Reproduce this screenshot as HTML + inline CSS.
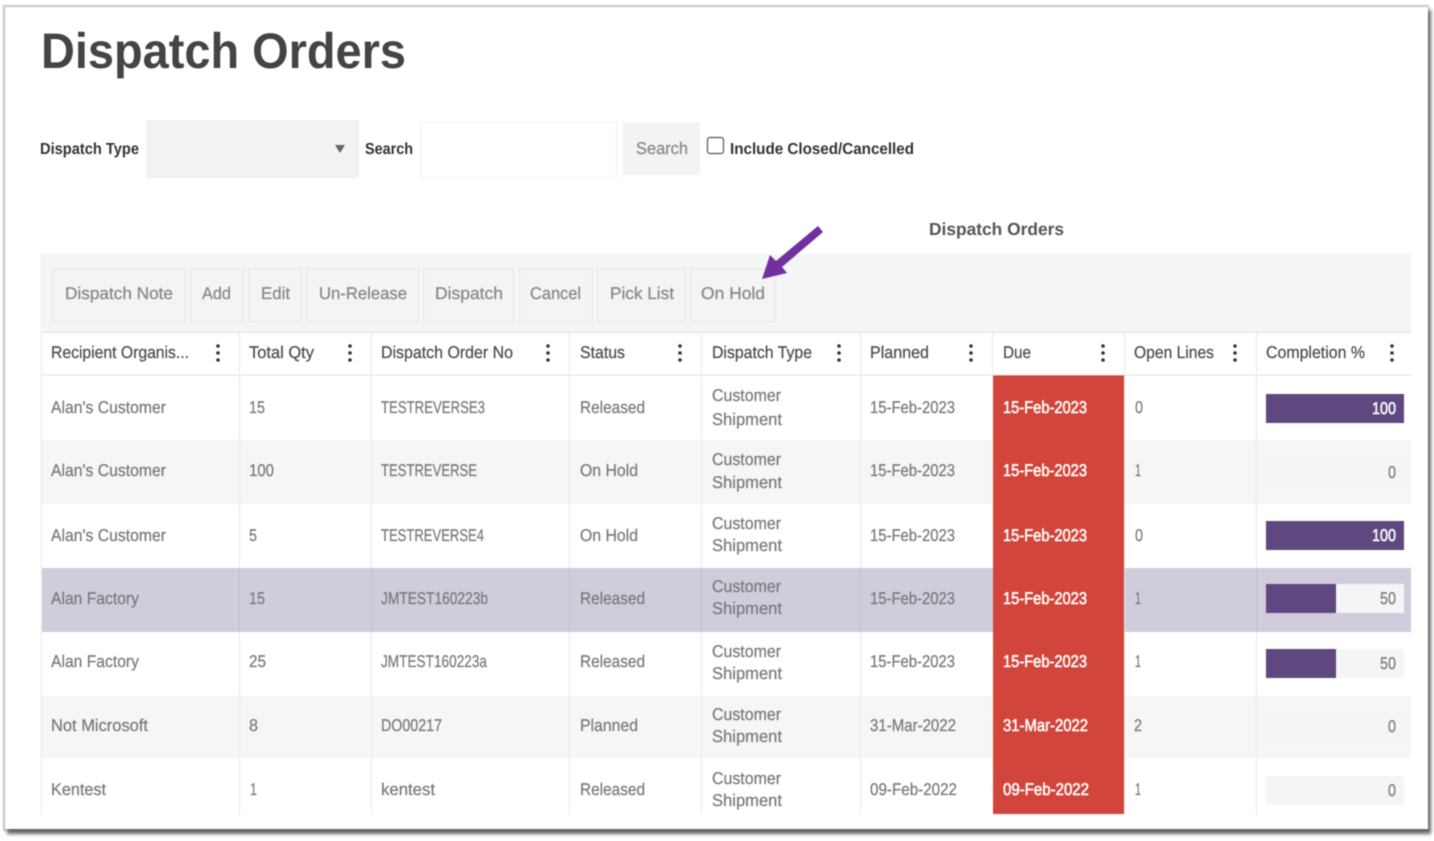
<!DOCTYPE html>
<html><head><meta charset="utf-8"><title>Dispatch Orders</title>
<style>
html,body{margin:0;padding:0;background:#fff;width:1434px;height:841px;overflow:hidden}
svg{display:block;filter:blur(.5px)}
text{font-family:"Liberation Sans",sans-serif;font-size:17px;fill:#7b7b7b;stroke:#7b7b7b;stroke-width:.25px;text-rendering:geometricPrecision}
.h{fill:#4f4f4f;stroke:#4f4f4f}
.b{font-weight:bold;fill:#333;stroke:none;font-size:16px}
.btn{fill:#888;stroke:#888}
.w{fill:#fff;stroke:#fff;stroke-width:.55px}
.wn{fill:#fff;stroke:#fff;stroke-width:.55px}
.l{stroke:#e8e8ea;stroke-width:1}
.s{fill:#f4f5f6}
.bt{fill:#f3f4f5;stroke:#e6e7e9;stroke-width:1}
.d{fill:#333}
</style></head><body>
<svg width="1434" height="841" viewBox="0 0 1434 841" xmlns="http://www.w3.org/2000/svg">
<rect x="3" y="5" width="1426" height="826" fill="#c4c4c4" style="filter:blur(.8px)"/>
<rect x="7" y="10" width="1424" height="824" fill="#666" style="filter:blur(1.8px)"/>
<rect x="5" y="7" width="1423" height="822" fill="#fff"/>

<text x="41" y="68" textLength="365" lengthAdjust="spacingAndGlyphs" style="font-size:50px;font-weight:bold;fill:#444;stroke:none">Dispatch Orders</text>

<text class="b" x="40" y="154" textLength="99" lengthAdjust="spacingAndGlyphs">Dispatch Type</text>
<rect x="146" y="120" width="213" height="58" fill="#f1f2f3"/>
<path d="M335 145h10l-5 8z" fill="#666"/>
<text class="b" x="365" y="154" textLength="48" lengthAdjust="spacingAndGlyphs">Search</text>
<rect x="420.500" y="122.500" width="196" height="55" fill="#fff" stroke="#eee"/>
<rect x="623" y="122" width="77" height="53" fill="#f2f3f4"/>
<text class="btn" x="636" y="154" textLength="52" lengthAdjust="spacingAndGlyphs">Search</text>
<rect x="707.500" y="137.500" width="16" height="16" rx="2.500" fill="#fff" stroke="#555" stroke-width="1.200"/>
<text class="b" x="730" y="154" textLength="184" lengthAdjust="spacingAndGlyphs">Include Closed/Cancelled</text>

<text x="929" y="235" textLength="135" lengthAdjust="spacingAndGlyphs" style="font-weight:bold;font-size:17.500px;fill:#555;stroke:none">Dispatch Orders</text>

<rect x="40" y="254" width="1371" height="78" fill="#f4f5f6"/>
<rect class="bt" x="52.500" y="268.500" width="133" height="53"/>
<rect class="bt" x="190.500" y="268.500" width="53" height="53"/>
<rect class="bt" x="248.500" y="268.500" width="53" height="53"/>
<rect class="bt" x="306.500" y="268.500" width="112" height="53"/>
<rect class="bt" x="423.500" y="268.500" width="90" height="53"/>
<rect class="bt" x="519.500" y="268.500" width="73" height="53"/>
<rect class="bt" x="597.500" y="268.500" width="88" height="53"/>
<rect class="bt" x="690.500" y="268.500" width="85" height="53"/>
<text class="btn" x="65" y="299" textLength="108" lengthAdjust="spacingAndGlyphs">Dispatch Note</text>
<text class="btn" x="202" y="299" textLength="29" lengthAdjust="spacingAndGlyphs">Add</text>
<text class="btn" x="261" y="299" textLength="29" lengthAdjust="spacingAndGlyphs">Edit</text>
<text class="btn" x="319" y="299" textLength="88" lengthAdjust="spacingAndGlyphs">Un-Release</text>
<text class="btn" x="435" y="299" textLength="68" lengthAdjust="spacingAndGlyphs">Dispatch</text>
<text class="btn" x="530" y="299" textLength="51" lengthAdjust="spacingAndGlyphs">Cancel</text>
<text class="btn" x="610" y="299" textLength="64" lengthAdjust="spacingAndGlyphs">Pick List</text>
<text class="btn" x="701" y="299" textLength="64" lengthAdjust="spacingAndGlyphs">On Hold</text>

<path d="M818 226L823 232L782 267L787 273L762 279L770 255L776 261Z" fill="#7030a0"/>

<!-- rows -->
<rect x="41" y="332" width="1370" height="43" fill="#fff"/>
<rect x="41" y="440" width="1370" height="64" fill="#f6f6f6"/>
<rect x="41" y="568" width="1370" height="64" fill="#d1ccdc"/>
<rect x="41" y="696" width="1370" height="62" fill="#f6f6f6"/>
<rect x="993" y="375" width="131" height="439" fill="#d2453a"/>
<path class="l" d="M41.500 332V814M239.500 332V814M371.500 332V814M569.500 332V814M701.500 332V814M860.500 332V814M992.500 332V375M1124.500 332V814M1256.500 332V814"/>
<path d="M239.500 568V632M371.500 568V632M569.500 568V632M701.500 568V632M860.500 568V632M1256.500 568V632" stroke="#c2bdcf"/>
<path d="M41 332.500H1411M41 375H1411" stroke="#e2e2e4" stroke-width="1"/>

<!-- header -->
<text class="h" x="51" y="358" textLength="138" lengthAdjust="spacingAndGlyphs">Recipient Organis...</text>
<text class="h" x="249" y="358" textLength="65" lengthAdjust="spacingAndGlyphs">Total Qty</text>
<text class="h" x="381" y="358" textLength="132" lengthAdjust="spacingAndGlyphs">Dispatch Order No</text>
<text class="h" x="580" y="358" textLength="45" lengthAdjust="spacingAndGlyphs">Status</text>
<text class="h" x="712" y="358" textLength="100" lengthAdjust="spacingAndGlyphs">Dispatch Type</text>
<text class="h" x="870" y="358" textLength="59" lengthAdjust="spacingAndGlyphs">Planned</text>
<text class="h" x="1003" y="358" textLength="28" lengthAdjust="spacingAndGlyphs">Due</text>
<text class="h" x="1134" y="358" textLength="80" lengthAdjust="spacingAndGlyphs">Open Lines</text>
<text class="h" x="1266" y="358" textLength="99" lengthAdjust="spacingAndGlyphs">Completion %</text>
<g class="d">
<circle cx="218" cy="346" r="1.800"/><circle cx="218" cy="353" r="1.800"/><circle cx="218" cy="360" r="1.800"/>
<circle cx="350" cy="346" r="1.800"/><circle cx="350" cy="353" r="1.800"/><circle cx="350" cy="360" r="1.800"/>
<circle cx="548" cy="346" r="1.800"/><circle cx="548" cy="353" r="1.800"/><circle cx="548" cy="360" r="1.800"/>
<circle cx="680" cy="346" r="1.800"/><circle cx="680" cy="353" r="1.800"/><circle cx="680" cy="360" r="1.800"/>
<circle cx="839" cy="346" r="1.800"/><circle cx="839" cy="353" r="1.800"/><circle cx="839" cy="360" r="1.800"/>
<circle cx="971" cy="346" r="1.800"/><circle cx="971" cy="353" r="1.800"/><circle cx="971" cy="360" r="1.800"/>
<circle cx="1103" cy="346" r="1.800"/><circle cx="1103" cy="353" r="1.800"/><circle cx="1103" cy="360" r="1.800"/>
<circle cx="1235" cy="346" r="1.800"/><circle cx="1235" cy="353" r="1.800"/><circle cx="1235" cy="360" r="1.800"/>
<circle cx="1392" cy="346" r="1.800"/><circle cx="1392" cy="353" r="1.800"/><circle cx="1392" cy="360" r="1.800"/>
</g>

<!-- col 1 -->
<text x="51" y="413" textLength="115" lengthAdjust="spacingAndGlyphs">Alan's Customer</text>
<text x="51" y="476" textLength="115" lengthAdjust="spacingAndGlyphs">Alan's Customer</text>
<text x="51" y="541" textLength="115" lengthAdjust="spacingAndGlyphs">Alan's Customer</text>
<text x="51" y="604" textLength="88" lengthAdjust="spacingAndGlyphs">Alan Factory</text>
<text x="51" y="667" textLength="88" lengthAdjust="spacingAndGlyphs">Alan Factory</text>
<text x="51" y="731" textLength="97" lengthAdjust="spacingAndGlyphs">Not Microsoft</text>
<text x="51" y="795" textLength="55" lengthAdjust="spacingAndGlyphs">Kentest</text>
<!-- col 2 -->
<text x="249" y="413" textLength="16" lengthAdjust="spacingAndGlyphs">15</text>
<text x="249" y="476" textLength="25" lengthAdjust="spacingAndGlyphs">100</text>
<text x="249" y="541" textLength="8" lengthAdjust="spacingAndGlyphs">5</text>
<text x="249" y="604" textLength="16" lengthAdjust="spacingAndGlyphs">15</text>
<text x="249" y="667" textLength="17" lengthAdjust="spacingAndGlyphs">25</text>
<text x="249" y="731" textLength="9" lengthAdjust="spacingAndGlyphs">8</text>
<text x="250" y="795" textLength="7" lengthAdjust="spacingAndGlyphs">1</text>
<!-- col 3 -->
<text x="381" y="413" textLength="104" lengthAdjust="spacingAndGlyphs">TESTREVERSE3</text>
<text x="381" y="476" textLength="96" lengthAdjust="spacingAndGlyphs">TESTREVERSE</text>
<text x="381" y="541" textLength="103" lengthAdjust="spacingAndGlyphs">TESTREVERSE4</text>
<text x="381" y="604" textLength="107" lengthAdjust="spacingAndGlyphs">JMTEST160223b</text>
<text x="381" y="667" textLength="106" lengthAdjust="spacingAndGlyphs">JMTEST160223a</text>
<text x="381" y="731" textLength="61" lengthAdjust="spacingAndGlyphs">DO00217</text>
<text x="381" y="795" textLength="54" lengthAdjust="spacingAndGlyphs">kentest</text>
<!-- col 4 -->
<text x="580" y="413" textLength="65" lengthAdjust="spacingAndGlyphs">Released</text>
<text x="580" y="476" textLength="58" lengthAdjust="spacingAndGlyphs">On Hold</text>
<text x="580" y="541" textLength="58" lengthAdjust="spacingAndGlyphs">On Hold</text>
<text x="580" y="604" textLength="65" lengthAdjust="spacingAndGlyphs">Released</text>
<text x="580" y="667" textLength="65" lengthAdjust="spacingAndGlyphs">Released</text>
<text x="580" y="731" textLength="58" lengthAdjust="spacingAndGlyphs">Planned</text>
<text x="580" y="795" textLength="65" lengthAdjust="spacingAndGlyphs">Released</text>
<!-- col 5 -->
<text x="712" y="401" textLength="69" lengthAdjust="spacingAndGlyphs">Customer</text>
<text x="712" y="425" textLength="70" lengthAdjust="spacingAndGlyphs">Shipment</text>
<text x="712" y="465" textLength="69" lengthAdjust="spacingAndGlyphs">Customer</text>
<text x="712" y="488" textLength="70" lengthAdjust="spacingAndGlyphs">Shipment</text>
<text x="712" y="529" textLength="69" lengthAdjust="spacingAndGlyphs">Customer</text>
<text x="712" y="551" textLength="70" lengthAdjust="spacingAndGlyphs">Shipment</text>
<text x="712" y="592" textLength="69" lengthAdjust="spacingAndGlyphs">Customer</text>
<text x="712" y="614" textLength="70" lengthAdjust="spacingAndGlyphs">Shipment</text>
<text x="712" y="657" textLength="69" lengthAdjust="spacingAndGlyphs">Customer</text>
<text x="712" y="679" textLength="70" lengthAdjust="spacingAndGlyphs">Shipment</text>
<text x="712" y="720" textLength="69" lengthAdjust="spacingAndGlyphs">Customer</text>
<text x="712" y="742" textLength="70" lengthAdjust="spacingAndGlyphs">Shipment</text>
<text x="712" y="784" textLength="69" lengthAdjust="spacingAndGlyphs">Customer</text>
<text x="712" y="806" textLength="70" lengthAdjust="spacingAndGlyphs">Shipment</text>
<!-- col 6 -->
<text x="870" y="413" textLength="85" lengthAdjust="spacingAndGlyphs">15-Feb-2023</text>
<text x="870" y="476" textLength="85" lengthAdjust="spacingAndGlyphs">15-Feb-2023</text>
<text x="870" y="541" textLength="85" lengthAdjust="spacingAndGlyphs">15-Feb-2023</text>
<text x="870" y="604" textLength="85" lengthAdjust="spacingAndGlyphs">15-Feb-2023</text>
<text x="870" y="667" textLength="85" lengthAdjust="spacingAndGlyphs">15-Feb-2023</text>
<text x="870" y="731" textLength="86" lengthAdjust="spacingAndGlyphs">31-Mar-2022</text>
<text x="870" y="795" textLength="87" lengthAdjust="spacingAndGlyphs">09-Feb-2022</text>
<!-- due -->
<text class="w" x="1003" y="413" textLength="84" lengthAdjust="spacingAndGlyphs">15-Feb-2023</text>
<text class="w" x="1003" y="476" textLength="84" lengthAdjust="spacingAndGlyphs">15-Feb-2023</text>
<text class="w" x="1003" y="541" textLength="84" lengthAdjust="spacingAndGlyphs">15-Feb-2023</text>
<text class="w" x="1003" y="604" textLength="84" lengthAdjust="spacingAndGlyphs">15-Feb-2023</text>
<text class="w" x="1003" y="667" textLength="84" lengthAdjust="spacingAndGlyphs">15-Feb-2023</text>
<text class="w" x="1003" y="731" textLength="85" lengthAdjust="spacingAndGlyphs">31-Mar-2022</text>
<text class="w" x="1003" y="795" textLength="86" lengthAdjust="spacingAndGlyphs">09-Feb-2022</text>
<!-- open lines -->
<text x="1135" y="413" textLength="8" lengthAdjust="spacingAndGlyphs">0</text>
<text x="1135" y="476" textLength="6" lengthAdjust="spacingAndGlyphs">1</text>
<text x="1135" y="541" textLength="8" lengthAdjust="spacingAndGlyphs">0</text>
<text x="1135" y="604" textLength="6" lengthAdjust="spacingAndGlyphs">1</text>
<text x="1135" y="667" textLength="6" lengthAdjust="spacingAndGlyphs">1</text>
<text x="1134" y="731" textLength="8" lengthAdjust="spacingAndGlyphs">2</text>
<text x="1135" y="795" textLength="6" lengthAdjust="spacingAndGlyphs">1</text>
<!-- completion -->
<rect x="1266" y="394" width="138" height="29" fill="#5f4880"/>
<text class="wn" x="1372" y="414" textLength="24" lengthAdjust="spacingAndGlyphs">100</text>
<rect class="s" x="1266" y="457" width="138" height="29"/>
<text x="1388" y="478" textLength="8" lengthAdjust="spacingAndGlyphs">0</text>
<rect x="1266" y="521" width="138" height="29" fill="#5f4880"/>
<text class="wn" x="1372" y="541" textLength="24" lengthAdjust="spacingAndGlyphs">100</text>
<rect class="s" x="1266" y="584" width="138" height="29"/>
<rect x="1266" y="584" width="70" height="29" fill="#5f4880"/>
<text x="1380" y="604" textLength="16" lengthAdjust="spacingAndGlyphs">50</text>
<rect class="s" x="1266" y="649" width="138" height="29"/>
<rect x="1266" y="649" width="70" height="29" fill="#5f4880"/>
<text x="1380" y="669" textLength="16" lengthAdjust="spacingAndGlyphs">50</text>
<rect class="s" x="1266" y="712" width="138" height="29"/>
<text x="1388" y="732" textLength="8" lengthAdjust="spacingAndGlyphs">0</text>
<rect class="s" x="1266" y="776" width="138" height="29"/>
<text x="1388" y="796" textLength="8" lengthAdjust="spacingAndGlyphs">0</text>
</svg>
</body></html>
